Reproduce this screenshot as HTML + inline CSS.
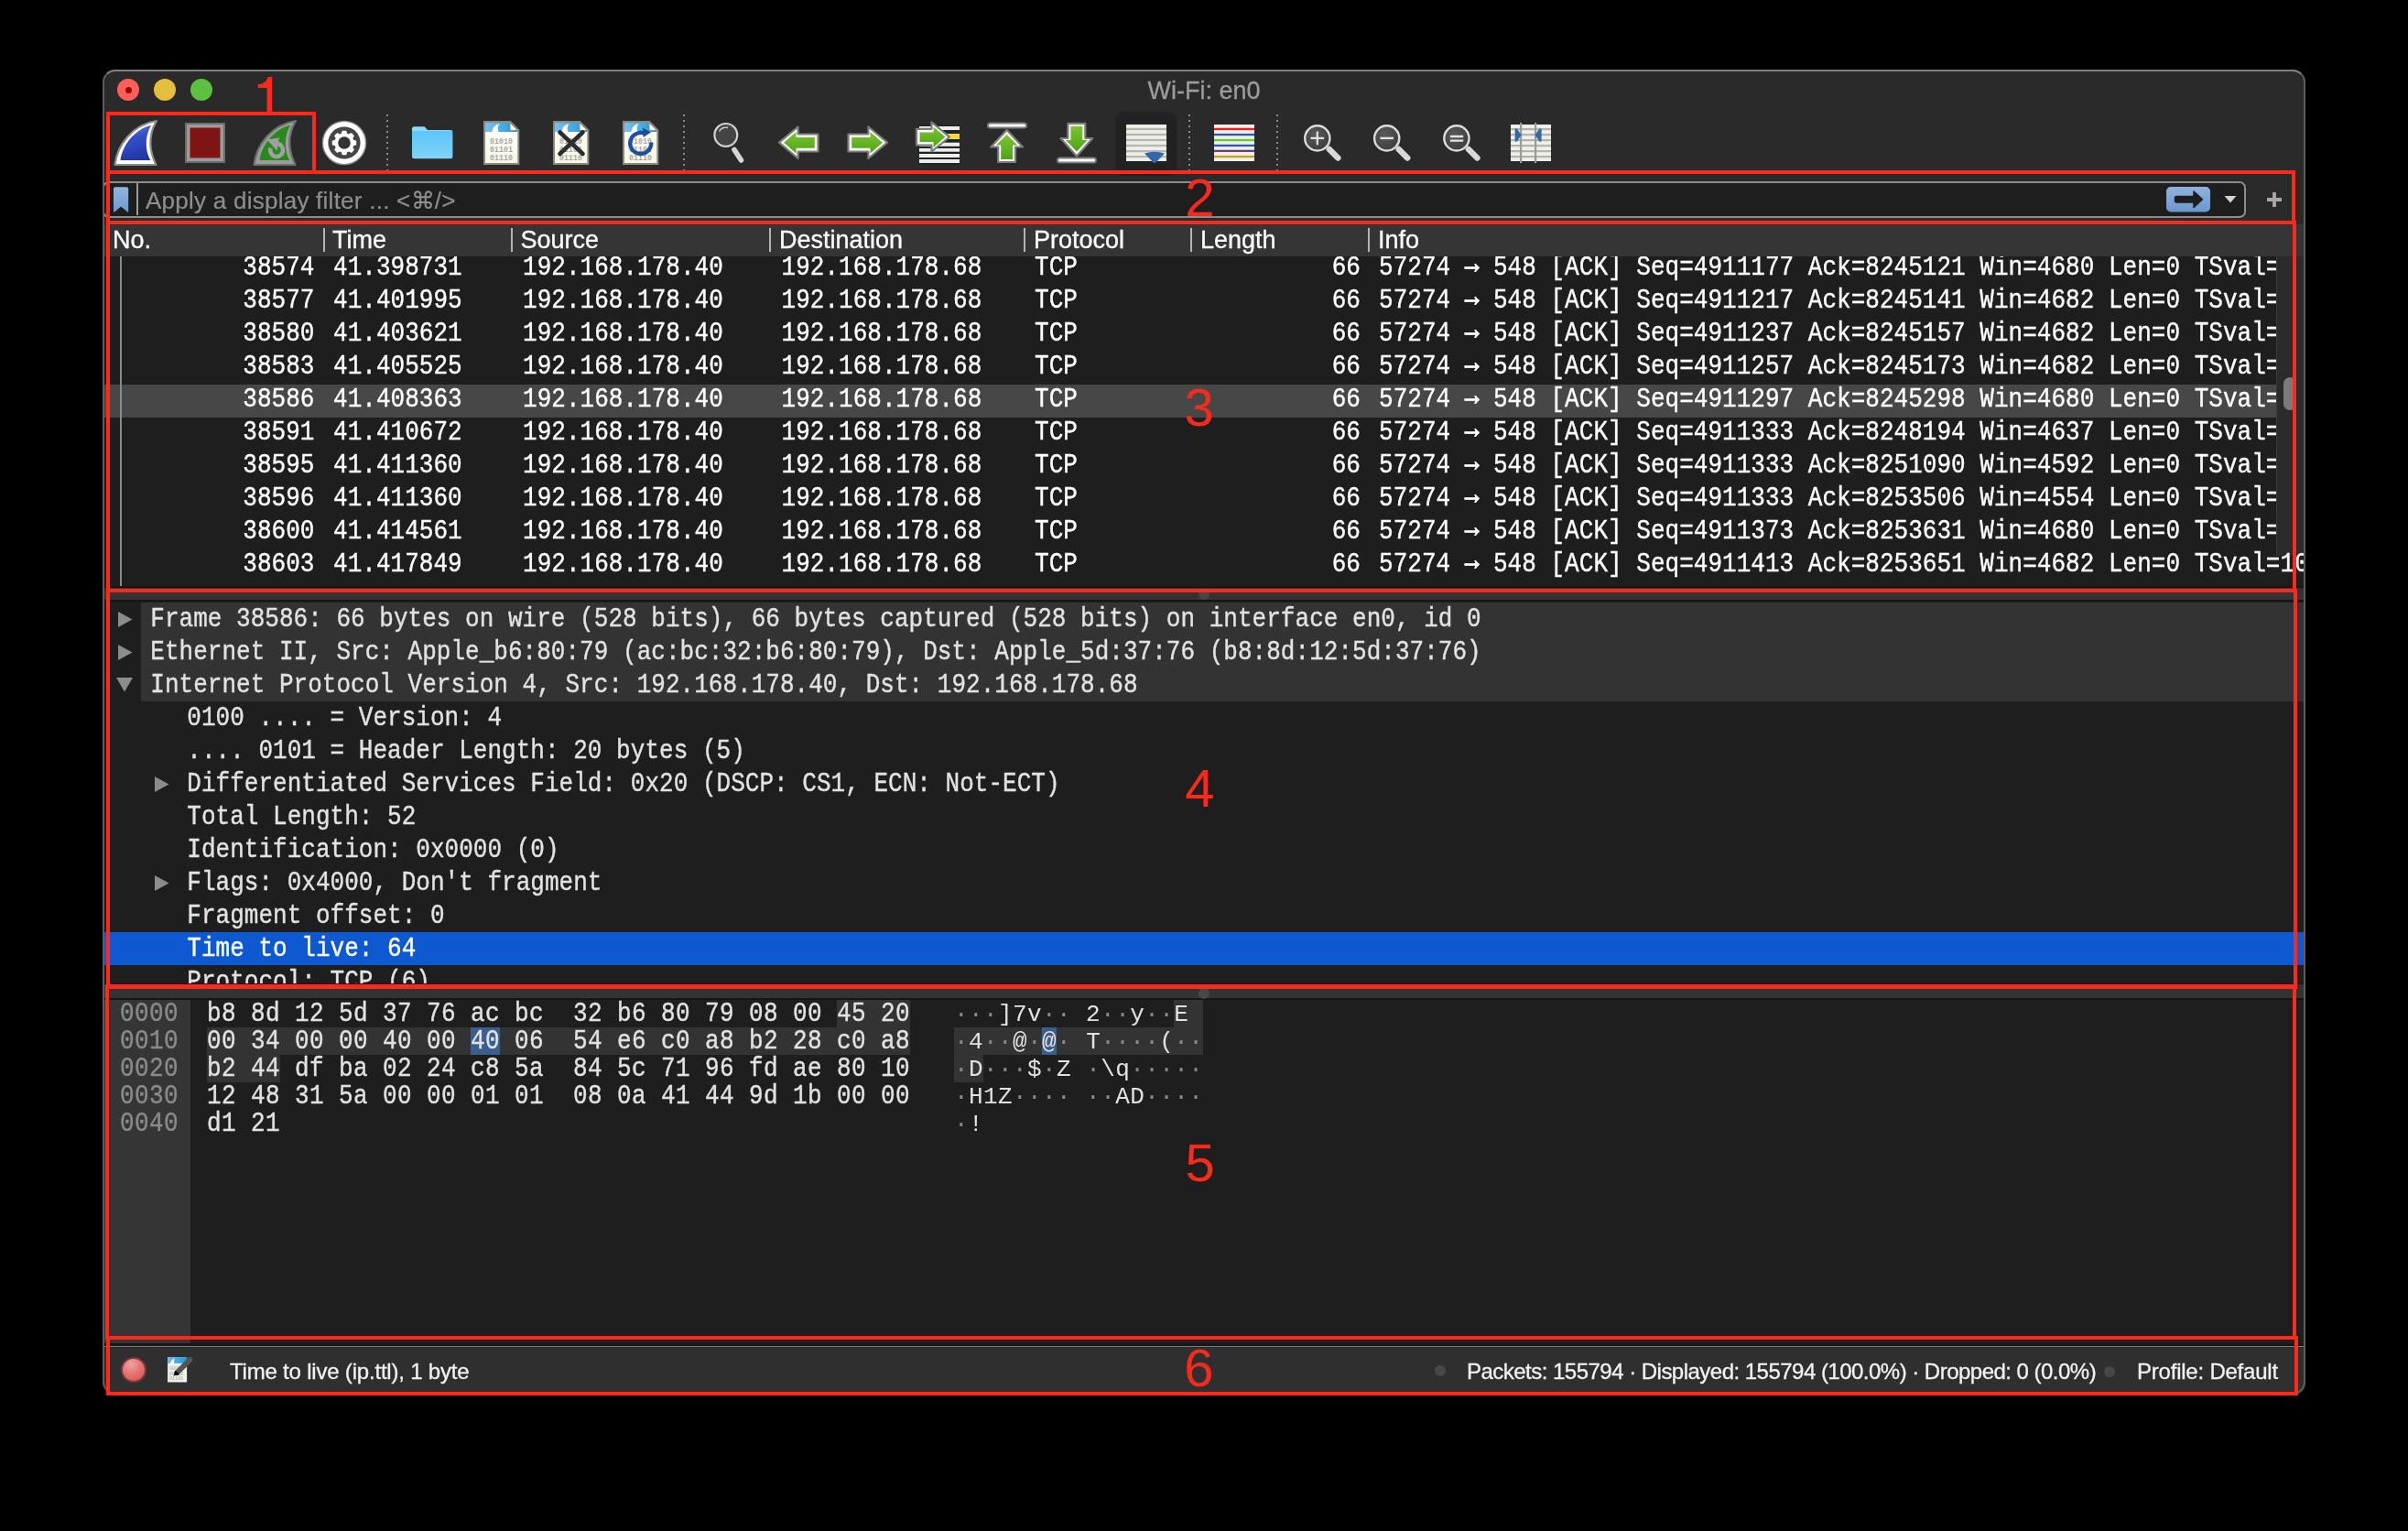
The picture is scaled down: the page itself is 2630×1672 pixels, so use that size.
<!DOCTYPE html>
<html><head><meta charset="utf-8"><title>Wireshark</title>
<style>
html,body{margin:0;padding:0;}
body{width:2630px;height:1672px;background:#000;position:relative;overflow:hidden;}
.r{position:absolute;}
.t{position:absolute;white-space:pre;}
</style></head><body>
<div style="position:absolute;left:0;top:0;width:2630px;height:1672px;will-change:transform;">
<div class="r" style="left:112px;top:76px;width:2406px;height:1447px;background:#2a2a2a;border-radius:14px;"></div>
<div class="r" style="left:128px;top:86px;width:24px;height:24px;border-radius:50%;background:#fe5f57;"></div>
<div class="r" style="left:136.5px;top:94.5px;width:7px;height:7px;border-radius:50%;background:#8f0b05;"></div>
<div class="r" style="left:168px;top:86px;width:24px;height:24px;border-radius:50%;background:#e4bf3d;"></div>
<div class="r" style="left:208px;top:86px;width:24px;height:24px;border-radius:50%;background:#5bc13f;"></div>
<div class="t" style="top:78.64px;font:27px/40px 'Liberation Sans', sans-serif;color:#9c9c9c;-webkit-text-stroke:0.3px #9c9c9c;right:1315px;transform:translateX(50%);">Wi-Fi: en0</div>
<svg class="r" style="left:0;top:0" width="2630" height="260" viewBox="0 0 2630 260"><defs>
<linearGradient id="gblue" x1="0" y1="0" x2="0.3" y2="1"><stop offset="0" stop-color="#7486de"/><stop offset="0.45" stop-color="#3450c8"/><stop offset="1" stop-color="#2338a8"/></linearGradient>
<linearGradient id="ggreen" x1="0" y1="0" x2="0" y2="1"><stop offset="0" stop-color="#7cc435"/><stop offset="1" stop-color="#4fa414"/></linearGradient>
<linearGradient id="gband" x1="0" y1="0" x2="1" y2="0"><stop offset="0" stop-color="#7cc0ea"/><stop offset="1" stop-color="#1b98da"/></linearGradient>
<linearGradient id="gpage" x1="0" y1="0" x2="0" y2="1"><stop offset="0" stop-color="#ffffff"/><stop offset="1" stop-color="#f6f6e4"/></linearGradient>
<linearGradient id="gfold" x1="0" y1="0" x2="0" y2="1"><stop offset="0" stop-color="#8fd8f9"/><stop offset="0.12" stop-color="#8fd8f9"/><stop offset="0.13" stop-color="#5ec5f6"/><stop offset="1" stop-color="#7ed4fb"/></linearGradient>
<radialGradient id="glens" cx="0.4" cy="0.35" r="0.7"><stop offset="0" stop-color="#5a5a5a"/><stop offset="1" stop-color="#3c3c3c"/></radialGradient>
</defs>
<path d="M125.5,180 C128,158 145,136 171,132 C166,140 164,150 164.3,158 C164.8,166 167,173 170.5,180 Z" fill="#ffffff" stroke="#8c8c8c" stroke-width="2.2" stroke-linejoin="round"/>
<path d="M131.5,175 C134,158 147,141.5 165,136.8 C161,144 159.5,151 159.8,158.5 C160.2,166 162,171 164.5,175 Z" fill="url(#gblue)"/>
<rect x="202" y="134" width="44" height="44" fill="#6c6c6c"/>
<rect x="204" y="136" width="40" height="40" fill="#9b9b9b"/>
<rect x="207.5" y="139.5" width="33" height="33" fill="#7e1414"/>
<path d="M277.5,180 C280,158 297,136 323,132 C318,140 316,150 316.3,158 C316.8,166 319,173 322.5,180 Z" fill="#9c9c9c" stroke="#707070" stroke-width="2.2" stroke-linejoin="round"/>
<path d="M283.5,175 C286,158 299,141.5 317,136.8 C313,144 311.5,151 311.8,158.5 C312.2,166 314,171 316.5,175 Z" fill="#288a1c"/>
<path d="M303.3,157.1 A7,7 0 1 1 295.5,161.6" fill="none" stroke="#a0a0a0" stroke-width="4.6"/>
<path d="M291.5,152.5 L305,150.5 L302.5,164.5 Z" fill="#a0a0a0"/>
<circle cx="376" cy="156" r="23.6" fill="#ffffff" stroke="#8a8a8a" stroke-width="1.4"/>
<circle cx="376" cy="156" r="17.6" fill="#454545"/>
<path d="M386.13,152.87 L389.21,153.73 L389.21,158.27 L386.13,159.13 L385.38,160.95 L386.94,163.74 L383.74,166.94 L380.95,165.38 L379.13,166.13 L378.27,169.21 L373.73,169.21 L372.87,166.13 L371.05,165.38 L368.26,166.94 L365.06,163.74 L366.62,160.95 L365.87,159.13 L362.79,158.27 L362.79,153.73 L365.87,152.87 L366.62,151.05 L365.06,148.26 L368.26,145.06 L371.05,146.62 L372.87,145.87 L373.73,142.79 L378.27,142.79 L379.13,145.87 L380.95,146.62 L383.74,145.06 L386.94,148.26 L385.38,151.05 Z" fill="#ffffff"/>
<circle cx="376" cy="156" r="6.8" fill="#333333"/>
<rect x="422" y="125" width="2" height="2" fill="#8a8a8a"/><rect x="422" y="131" width="2" height="2" fill="#8a8a8a"/><rect x="422" y="137" width="2" height="2" fill="#8a8a8a"/><rect x="422" y="143" width="2" height="2" fill="#8a8a8a"/><rect x="422" y="149" width="2" height="2" fill="#8a8a8a"/><rect x="422" y="155" width="2" height="2" fill="#8a8a8a"/><rect x="422" y="161" width="2" height="2" fill="#8a8a8a"/><rect x="422" y="167" width="2" height="2" fill="#8a8a8a"/><rect x="422" y="173" width="2" height="2" fill="#8a8a8a"/><rect x="422" y="179" width="2" height="2" fill="#8a8a8a"/><rect x="422" y="185" width="2" height="2" fill="#8a8a8a"/>
<rect x="746" y="125" width="2" height="2" fill="#8a8a8a"/><rect x="746" y="131" width="2" height="2" fill="#8a8a8a"/><rect x="746" y="137" width="2" height="2" fill="#8a8a8a"/><rect x="746" y="143" width="2" height="2" fill="#8a8a8a"/><rect x="746" y="149" width="2" height="2" fill="#8a8a8a"/><rect x="746" y="155" width="2" height="2" fill="#8a8a8a"/><rect x="746" y="161" width="2" height="2" fill="#8a8a8a"/><rect x="746" y="167" width="2" height="2" fill="#8a8a8a"/><rect x="746" y="173" width="2" height="2" fill="#8a8a8a"/><rect x="746" y="179" width="2" height="2" fill="#8a8a8a"/><rect x="746" y="185" width="2" height="2" fill="#8a8a8a"/>
<rect x="1298" y="125" width="2" height="2" fill="#8a8a8a"/><rect x="1298" y="131" width="2" height="2" fill="#8a8a8a"/><rect x="1298" y="137" width="2" height="2" fill="#8a8a8a"/><rect x="1298" y="143" width="2" height="2" fill="#8a8a8a"/><rect x="1298" y="149" width="2" height="2" fill="#8a8a8a"/><rect x="1298" y="155" width="2" height="2" fill="#8a8a8a"/><rect x="1298" y="161" width="2" height="2" fill="#8a8a8a"/><rect x="1298" y="167" width="2" height="2" fill="#8a8a8a"/><rect x="1298" y="173" width="2" height="2" fill="#8a8a8a"/><rect x="1298" y="179" width="2" height="2" fill="#8a8a8a"/><rect x="1298" y="185" width="2" height="2" fill="#8a8a8a"/>
<rect x="1394" y="125" width="2" height="2" fill="#8a8a8a"/><rect x="1394" y="131" width="2" height="2" fill="#8a8a8a"/><rect x="1394" y="137" width="2" height="2" fill="#8a8a8a"/><rect x="1394" y="143" width="2" height="2" fill="#8a8a8a"/><rect x="1394" y="149" width="2" height="2" fill="#8a8a8a"/><rect x="1394" y="155" width="2" height="2" fill="#8a8a8a"/><rect x="1394" y="161" width="2" height="2" fill="#8a8a8a"/><rect x="1394" y="167" width="2" height="2" fill="#8a8a8a"/><rect x="1394" y="173" width="2" height="2" fill="#8a8a8a"/><rect x="1394" y="179" width="2" height="2" fill="#8a8a8a"/><rect x="1394" y="185" width="2" height="2" fill="#8a8a8a"/>
<path d="M450,140.5 Q450,138.3 452.3,138.3 L463.5,138.3 L467,142 L492.2,142 Q494.4,142 494.4,144.2 L494.4,171 Q494.4,173.2 492.2,173.2 L452.2,173.2 Q450,173.2 450,171 Z" fill="url(#gfold)"/>
<path d="M528,132 L557.7,132 L567.3,141.7 L567.3,180 L528,180 Z" fill="#8a8a80"/>
<path d="M530,134 L557,134 L565.3,142.4 L565.3,178 L530,178 Z" fill="url(#gpage)"/>
<path d="M530,134 L557,134 L565.3,142.4 L565.3,144 L530,144 Z" fill="url(#gband)"/>
<path d="M537.5,144 C538,139 541,136 545.5,135 C543.5,138 543,141 544.5,144 Z" fill="#ffffff"/>
<path d="M557,134 L557,142.4 L565.3,142.4 Z" fill="#ffffff" stroke="#8a8a80" stroke-width="1"/>
<text x="535" y="156.5" font-family="Liberation Mono" font-weight="bold" font-size="8.6" fill="#a6a6a0" textLength="25" lengthAdjust="spacingAndGlyphs">01010</text>
<text x="535" y="165.5" font-family="Liberation Mono" font-weight="bold" font-size="8.6" fill="#a6a6a0" textLength="25" lengthAdjust="spacingAndGlyphs">01101</text>
<text x="535" y="174.5" font-family="Liberation Mono" font-weight="bold" font-size="8.6" fill="#a6a6a0" textLength="25" lengthAdjust="spacingAndGlyphs">01110</text>

<path d="M604,132 L633.7,132 L643.3,141.7 L643.3,180 L604,180 Z" fill="#8a8a80"/>
<path d="M606,134 L633,134 L641.3,142.4 L641.3,178 L606,178 Z" fill="url(#gpage)"/>
<path d="M606,134 L633,134 L641.3,142.4 L641.3,144 L606,144 Z" fill="url(#gband)"/>
<path d="M613.5,144 C614,139 617,136 621.5,135 C619.5,138 619,141 620.5,144 Z" fill="#ffffff"/>
<path d="M633,134 L633,142.4 L641.3,142.4 Z" fill="#ffffff" stroke="#8a8a80" stroke-width="1"/>
<text x="611" y="156.5" font-family="Liberation Mono" font-weight="bold" font-size="8.6" fill="#a6a6a0" textLength="25" lengthAdjust="spacingAndGlyphs">01010</text>
<text x="611" y="165.5" font-family="Liberation Mono" font-weight="bold" font-size="8.6" fill="#a6a6a0" textLength="25" lengthAdjust="spacingAndGlyphs">01101</text>
<text x="611" y="174.5" font-family="Liberation Mono" font-weight="bold" font-size="8.6" fill="#a6a6a0" textLength="25" lengthAdjust="spacingAndGlyphs">01110</text>
<path d="M611.5,144.5 L636.5,168 M636.5,144.5 L611.5,168" stroke="#2b2d2e" stroke-width="4.6" stroke-linecap="round"/>
<path d="M680,132 L709.7,132 L719.3,141.7 L719.3,180 L680,180 Z" fill="#8a8a80"/>
<path d="M682,134 L709,134 L717.3,142.4 L717.3,178 L682,178 Z" fill="url(#gpage)"/>
<path d="M682,134 L709,134 L717.3,142.4 L717.3,144 L682,144 Z" fill="url(#gband)"/>
<path d="M689.5,144 C690,139 693,136 697.5,135 C695.5,138 695,141 696.5,144 Z" fill="#ffffff"/>
<path d="M709,134 L709,142.4 L717.3,142.4 Z" fill="#ffffff" stroke="#8a8a80" stroke-width="1"/>
<text x="687" y="156.5" font-family="Liberation Mono" font-weight="bold" font-size="8.6" fill="#a6a6a0" textLength="25" lengthAdjust="spacingAndGlyphs">01010</text>
<text x="687" y="165.5" font-family="Liberation Mono" font-weight="bold" font-size="8.6" fill="#a6a6a0" textLength="25" lengthAdjust="spacingAndGlyphs">01101</text>
<text x="687" y="174.5" font-family="Liberation Mono" font-weight="bold" font-size="8.6" fill="#a6a6a0" textLength="25" lengthAdjust="spacingAndGlyphs">01110</text>
<path d="M705.5,146.5 A11.5,11.5 0 1 0 711.2,155.5" fill="none" stroke="#1e4f9c" stroke-width="4.4"/><path d="M702,139.5 L711,144.5 L702.5,150 Z" fill="#1e4f9c"/>
<line x1="802" y1="163.5" x2="809.5" y2="175" stroke="#d6d6d6" stroke-width="5.6" stroke-linecap="round"/>
<circle cx="792.8" cy="147.4" r="12.4" fill="#444444" stroke="#d2d2d2" stroke-width="2.2"/>
<path d="M785.5,143.5 A8,8 0 0 1 795,139.5" fill="none" stroke="#d2d2d2" stroke-width="1.4"/>
<path d="M851,155.7 L871.6,138.5 L871.6,146.5 L893.5,146.5 L893.5,165.5 L871.6,165.5 L871.6,173 Z" fill="#ffffff" stroke="#7c7c7c" stroke-width="2.2" stroke-linejoin="round"/>
<path d="M856,155.7 L869.5,144 L869.5,150 L889.8,150 L889.8,161.8 L869.5,161.8 L869.5,167.5 Z" fill="url(#ggreen)"/>
<path d="M969.0,155.7 L948.4,138.5 L948.4,146.5 L926.5,146.5 L926.5,165.5 L948.4,165.5 L948.4,173 Z" fill="#ffffff" stroke="#7c7c7c" stroke-width="2.2" stroke-linejoin="round"/>
<path d="M964.0,155.7 L950.5,144 L950.5,150 L930.2,150 L930.2,161.8 L950.5,161.8 L950.5,167.5 Z" fill="url(#ggreen)"/>
<rect x="1004" y="136" width="44" height="44" fill="#1e2428"/>
<rect x="1004" y="138" width="44" height="4" fill="#ededea"/>
<rect x="1004" y="146" width="44" height="6" fill="#f6d83a"/>
<rect x="1004" y="155.7" width="44" height="4.100000000000023" fill="#ededea"/>
<rect x="1004" y="162" width="44" height="3.6999999999999886" fill="#ededea"/>
<rect x="1004" y="168" width="44" height="4" fill="#ededea"/>
<rect x="1004" y="174" width="44" height="4" fill="#ededea"/>
<rect x="1004" y="141" width="44" height="4" fill="#ededea" opacity="0"/>
<path d="M1037,149.6 L1017.5,133.5 L1017.5,140.8 L1001,140.8 L1001,158.5 L1017.5,158.5 L1017.5,165.5 Z" fill="#ffffff" stroke="#7c7c7c" stroke-width="2.2" stroke-linejoin="round"/>
<path d="M1032.5,149.6 L1019.5,138.5 L1019.5,144.5 L1004.5,144.5 L1004.5,155 L1019.5,155 L1019.5,161 Z" fill="url(#ggreen)"/>
<rect x="1079" y="134.5" width="42" height="5" rx="2.5" fill="#ffffff" stroke="#7c7c7c" stroke-width="2"/>
<path d="M1099.6,142 L1117,160.5 L1109,160.5 L1109,177 L1090.2,177 L1090.2,160.5 L1082.3,160.5 Z" fill="#ffffff" stroke="#7c7c7c" stroke-width="2.2" stroke-linejoin="round"/>
<path d="M1099.6,147 L1111.5,158.5 L1106,158.5 L1106,174 L1093.2,174 L1093.2,158.5 L1087.7,158.5 Z" fill="url(#ggreen)"/>
<path d="M1175.9,170.5 L1193.3,151 L1185.3,151 L1185.3,134.8 L1166.4,134.8 L1166.4,151 L1158.5,151 Z" fill="#ffffff" stroke="#7c7c7c" stroke-width="2.2" stroke-linejoin="round"/>
<path d="M1175.9,165.5 L1187.8,153 L1182.3,153 L1182.3,137.8 L1169.4,137.8 L1169.4,153 L1163.9,153 Z" fill="url(#ggreen)"/>
<rect x="1155" y="172.5" width="42" height="5" rx="2.5" fill="#ffffff" stroke="#7c7c7c" stroke-width="2"/>
<rect x="1218" y="122" width="67.6" height="70" rx="9" fill="#222222"/>
<rect x="1230" y="134.5" width="44" height="42.5" fill="#1f262a"/>
<rect x="1230" y="136" width="44" height="40" fill="#eeeeea"/>
<rect x="1230" y="139.9" width="44" height="2.2" fill="#b4b6ae"/>
<rect x="1230" y="145.9" width="44" height="2.2" fill="#b4b6ae"/>
<rect x="1230" y="151.9" width="44" height="2.2" fill="#b4b6ae"/>
<rect x="1230" y="157.9" width="44" height="2.2" fill="#b4b6ae"/>
<rect x="1230" y="164" width="44" height="2.2" fill="#b4b6ae"/>
<rect x="1230" y="170" width="44" height="2.2" fill="#b4b6ae"/>
<path d="M1250,167.5 Q1261,164 1272,167.5 L1263,177 Q1261,179 1259,177 Z" fill="#3467aa"/>
<rect x="1326" y="136" width="44" height="40" fill="#efefec"/>
<rect x="1326" y="139.8" width="44" height="2.3" fill="#f01a1a"/>
<rect x="1326" y="145.9" width="44" height="2.3" fill="#2a5aa8"/>
<rect x="1326" y="151.9" width="44" height="2.3" fill="#5fcf22"/>
<rect x="1326" y="157.8" width="44" height="2.3" fill="#2a5aa8"/>
<rect x="1326" y="163.70000000000002" width="44" height="2.3" fill="#6e3c7c"/>
<rect x="1326" y="169.9" width="44" height="2.3" fill="#c8a222"/>
<line x1="1451.8" y1="163.0" x2="1461.3" y2="172.5" stroke="#d8d8d8" stroke-width="6.5" stroke-linecap="round"/>
<circle cx="1438.8" cy="150.9" r="13.6" fill="url(#glens)" stroke="#dcdcdc" stroke-width="2.4"/>
<path d="M1431.5,150.9 L1446.1,150.9 M1438.8,143.6 L1438.8,158.2" stroke="#e2e2e2" stroke-width="2.2"/>
<line x1="1527.7" y1="163.0" x2="1537.2" y2="172.5" stroke="#d8d8d8" stroke-width="6.5" stroke-linecap="round"/>
<circle cx="1514.7" cy="150.9" r="13.6" fill="url(#glens)" stroke="#dcdcdc" stroke-width="2.4"/>
<path d="M1507.4,150.9 L1522,150.9" stroke="#e2e2e2" stroke-width="2.4"/>
<line x1="1603.9" y1="163.0" x2="1613.4" y2="172.5" stroke="#d8d8d8" stroke-width="6.5" stroke-linecap="round"/>
<circle cx="1590.9" cy="150.9" r="13.6" fill="url(#glens)" stroke="#dcdcdc" stroke-width="2.4"/>
<path d="M1583.9,149 L1598.2,149 M1583.9,153.6 L1598.2,153.6" stroke="#e2e2e2" stroke-width="2.4"/>
<rect x="1650" y="136" width="44" height="40" fill="#efefec"/>
<rect x="1650" y="140" width="44" height="2.2" fill="#b2b4aa"/>
<rect x="1650" y="146" width="44" height="2.2" fill="#b2b4aa"/>
<rect x="1650" y="152" width="44" height="2.2" fill="#b2b4aa"/>
<rect x="1650" y="158" width="44" height="2.2" fill="#b2b4aa"/>
<rect x="1650" y="164" width="44" height="2.2" fill="#b2b4aa"/>
<rect x="1650" y="170" width="44" height="2.2" fill="#b2b4aa"/>
<rect x="1660" y="134" width="2.2" height="44" fill="#9a9c94"/><rect x="1676" y="134" width="2.2" height="44" fill="#9a9c94"/>
<path d="M1654.6,141.5 Q1655,139.5 1657,140.8 L1661.7,147.6 L1657,154.2 Q1655,155.5 1654.6,153.5 Z" fill="#3467aa"/>
<path d="M1683.6,141.5 Q1683.2,139.5 1681.2,140.8 L1676.5,147.6 L1681.2,154.2 Q1683.2,155.5 1683.6,153.5 Z" fill="#3467aa"/></svg>
<div class="r" style="left:112px;top:198px;width:2337px;height:36px;border:2px solid #8d8d8d;border-radius:7px;background:#1e1e1e;"></div>
<svg class="r" style="left:0;top:190px" width="2630" height="55" viewBox="0 190 2630 55"><defs><linearGradient id="gbm" x1="0" y1="0" x2="0" y2="1"><stop offset="0" stop-color="#93b4dc"/><stop offset="1" stop-color="#6c9bd2"/></linearGradient><linearGradient id="gapply" x1="0" y1="0" x2="0" y2="1"><stop offset="0" stop-color="#8fb2dc"/><stop offset="1" stop-color="#6a98cf"/></linearGradient></defs><path d="M124,206 Q124,204.2 126,204.2 L138.2,204.2 Q140.2,204.2 140.2,206 L140.2,230.5 Q140.2,232.5 138.5,231 L132.1,225.5 L125.7,231 Q124,232.5 124,230.5 Z" fill="url(#gbm)"/><rect x="149" y="200.2" width="2" height="34.8" fill="#9a9a9a"/><rect x="2366" y="204" width="48" height="27.5" rx="5" fill="url(#gapply)"/><path d="M2377.5,214.5 L2396,214.5 L2396,209 L2405.5,217.7 L2396,226.5 L2396,221 L2377.5,221 Q2375.5,221 2375.5,219 L2375.5,216.5 Q2375.5,214.5 2377.5,214.5 Z" fill="#1e1e1e" stroke="#1e1e1e" stroke-width="1.5" stroke-linejoin="round"/><path d="M2429.5,214 L2442.5,214 L2436,221.5 Z" fill="#d4d4cc"/><path d="M2476,218 L2492,218 M2484,210 L2484,226" stroke="#a8a8a8" stroke-width="3.8"/></svg>
<div class="t" style="top:199.99px;font:26px/39px 'Liberation Sans', sans-serif;color:#8e8e8e;letter-spacing:0.25px;-webkit-text-stroke:0.2px #8e8e8e;left:159px;">Apply a display filter ... &lt;⌘/&gt;</div>
<div class="r" style="left:114px;top:245px;width:2404px;height:35px;background:#353535;"></div>
<div class="r" style="left:114px;top:280px;width:2372px;height:360px;background:#1e1e1e;"></div>
<div class="r" style="left:2486px;top:280px;width:32px;height:327px;background:#2b2b2b;border-left:1px solid #3a3a3a;box-sizing:border-box;"></div>
<div class="r" style="left:2486px;top:607px;width:32px;height:33px;background:#1e1e1e;"></div>
<div class="r" style="left:353px;top:249px;width:2px;height:26px;background:#b4b4b4;"></div>
<div class="r" style="left:558px;top:249px;width:2px;height:26px;background:#b4b4b4;"></div>
<div class="r" style="left:840px;top:249px;width:2px;height:26px;background:#b4b4b4;"></div>
<div class="r" style="left:1118px;top:249px;width:2px;height:26px;background:#b4b4b4;"></div>
<div class="r" style="left:1300px;top:249px;width:2px;height:26px;background:#b4b4b4;"></div>
<div class="r" style="left:1494px;top:249px;width:2px;height:26px;background:#b4b4b4;"></div>
<div class="t" style="top:241.64px;font:27px/40px 'Liberation Sans', sans-serif;color:#ffffff;-webkit-text-stroke:0.3px #ffffff;left:123px;">No.</div>
<div class="t" style="top:241.64px;font:27px/40px 'Liberation Sans', sans-serif;color:#ffffff;-webkit-text-stroke:0.3px #ffffff;left:363px;">Time</div>
<div class="t" style="top:241.64px;font:27px/40px 'Liberation Sans', sans-serif;color:#ffffff;-webkit-text-stroke:0.3px #ffffff;left:568.5px;">Source</div>
<div class="t" style="top:241.64px;font:27px/40px 'Liberation Sans', sans-serif;color:#ffffff;-webkit-text-stroke:0.3px #ffffff;left:851px;">Destination</div>
<div class="t" style="top:241.64px;font:27px/40px 'Liberation Sans', sans-serif;color:#ffffff;-webkit-text-stroke:0.3px #ffffff;left:1129px;">Protocol</div>
<div class="t" style="top:241.64px;font:27px/40px 'Liberation Sans', sans-serif;color:#ffffff;-webkit-text-stroke:0.3px #ffffff;left:1311px;">Length</div>
<div class="t" style="top:241.64px;font:27px/40px 'Liberation Sans', sans-serif;color:#ffffff;-webkit-text-stroke:0.3px #ffffff;left:1505px;">Info</div>
<div class="r" style="left:114px;top:280px;width:2404px;height:360px;overflow:hidden;"><div class="t" style="top:-6.42px;font:26px/39px 'Liberation Mono', monospace;color:#ffffff;letter-spacing:0.025px;transform:scaleY(1.15);transform-origin:0 26.42px;-webkit-text-stroke:0.35px #ffffff;right:2174.5px;">38574</div><div class="t" style="top:-6.42px;font:26px/39px 'Liberation Mono', monospace;color:#ffffff;letter-spacing:0.025px;transform:scaleY(1.15);transform-origin:0 26.42px;-webkit-text-stroke:0.35px #ffffff;left:250px;">41.398731</div><div class="t" style="top:-6.42px;font:26px/39px 'Liberation Mono', monospace;color:#ffffff;letter-spacing:0.025px;transform:scaleY(1.15);transform-origin:0 26.42px;-webkit-text-stroke:0.35px #ffffff;left:457px;">192.168.178.40</div><div class="t" style="top:-6.42px;font:26px/39px 'Liberation Mono', monospace;color:#ffffff;letter-spacing:0.025px;transform:scaleY(1.15);transform-origin:0 26.42px;-webkit-text-stroke:0.35px #ffffff;left:739.5px;">192.168.178.68</div><div class="t" style="top:-6.42px;font:26px/39px 'Liberation Mono', monospace;color:#ffffff;letter-spacing:0.025px;transform:scaleY(1.15);transform-origin:0 26.42px;-webkit-text-stroke:0.35px #ffffff;left:1016px;">TCP</div><div class="t" style="top:-6.42px;font:26px/39px 'Liberation Mono', monospace;color:#ffffff;letter-spacing:0.025px;transform:scaleY(1.15);transform-origin:0 26.42px;-webkit-text-stroke:0.35px #ffffff;right:1032px;">66</div><div class="t" style="top:-6.42px;font:26px/39px 'Liberation Mono', monospace;color:#ffffff;letter-spacing:0.025px;transform:scaleY(1.15);transform-origin:0 26.42px;-webkit-text-stroke:0.35px #ffffff;left:1392px;width:980px;overflow:hidden;white-space:nowrap;">57274 <span style="display:inline-block;width:15.6px;transform:translateY(-1.5px) scale(1.0,1.12);transform-origin:50% 62%;-webkit-text-stroke:0.9px #fff;">→</span> 548 [ACK] Seq=4911177 Ack=8245121 Win=4680 Len=0 TSval=1000000000 TSecr=100000000</div><div class="t" style="top:29.58px;font:26px/39px 'Liberation Mono', monospace;color:#ffffff;letter-spacing:0.025px;transform:scaleY(1.15);transform-origin:0 26.42px;-webkit-text-stroke:0.35px #ffffff;right:2174.5px;">38577</div><div class="t" style="top:29.58px;font:26px/39px 'Liberation Mono', monospace;color:#ffffff;letter-spacing:0.025px;transform:scaleY(1.15);transform-origin:0 26.42px;-webkit-text-stroke:0.35px #ffffff;left:250px;">41.401995</div><div class="t" style="top:29.58px;font:26px/39px 'Liberation Mono', monospace;color:#ffffff;letter-spacing:0.025px;transform:scaleY(1.15);transform-origin:0 26.42px;-webkit-text-stroke:0.35px #ffffff;left:457px;">192.168.178.40</div><div class="t" style="top:29.58px;font:26px/39px 'Liberation Mono', monospace;color:#ffffff;letter-spacing:0.025px;transform:scaleY(1.15);transform-origin:0 26.42px;-webkit-text-stroke:0.35px #ffffff;left:739.5px;">192.168.178.68</div><div class="t" style="top:29.58px;font:26px/39px 'Liberation Mono', monospace;color:#ffffff;letter-spacing:0.025px;transform:scaleY(1.15);transform-origin:0 26.42px;-webkit-text-stroke:0.35px #ffffff;left:1016px;">TCP</div><div class="t" style="top:29.58px;font:26px/39px 'Liberation Mono', monospace;color:#ffffff;letter-spacing:0.025px;transform:scaleY(1.15);transform-origin:0 26.42px;-webkit-text-stroke:0.35px #ffffff;right:1032px;">66</div><div class="t" style="top:29.58px;font:26px/39px 'Liberation Mono', monospace;color:#ffffff;letter-spacing:0.025px;transform:scaleY(1.15);transform-origin:0 26.42px;-webkit-text-stroke:0.35px #ffffff;left:1392px;width:980px;overflow:hidden;white-space:nowrap;">57274 <span style="display:inline-block;width:15.6px;transform:translateY(-1.5px) scale(1.0,1.12);transform-origin:50% 62%;-webkit-text-stroke:0.9px #fff;">→</span> 548 [ACK] Seq=4911217 Ack=8245141 Win=4682 Len=0 TSval=1000000000 TSecr=100000000</div><div class="t" style="top:65.58px;font:26px/39px 'Liberation Mono', monospace;color:#ffffff;letter-spacing:0.025px;transform:scaleY(1.15);transform-origin:0 26.42px;-webkit-text-stroke:0.35px #ffffff;right:2174.5px;">38580</div><div class="t" style="top:65.58px;font:26px/39px 'Liberation Mono', monospace;color:#ffffff;letter-spacing:0.025px;transform:scaleY(1.15);transform-origin:0 26.42px;-webkit-text-stroke:0.35px #ffffff;left:250px;">41.403621</div><div class="t" style="top:65.58px;font:26px/39px 'Liberation Mono', monospace;color:#ffffff;letter-spacing:0.025px;transform:scaleY(1.15);transform-origin:0 26.42px;-webkit-text-stroke:0.35px #ffffff;left:457px;">192.168.178.40</div><div class="t" style="top:65.58px;font:26px/39px 'Liberation Mono', monospace;color:#ffffff;letter-spacing:0.025px;transform:scaleY(1.15);transform-origin:0 26.42px;-webkit-text-stroke:0.35px #ffffff;left:739.5px;">192.168.178.68</div><div class="t" style="top:65.58px;font:26px/39px 'Liberation Mono', monospace;color:#ffffff;letter-spacing:0.025px;transform:scaleY(1.15);transform-origin:0 26.42px;-webkit-text-stroke:0.35px #ffffff;left:1016px;">TCP</div><div class="t" style="top:65.58px;font:26px/39px 'Liberation Mono', monospace;color:#ffffff;letter-spacing:0.025px;transform:scaleY(1.15);transform-origin:0 26.42px;-webkit-text-stroke:0.35px #ffffff;right:1032px;">66</div><div class="t" style="top:65.58px;font:26px/39px 'Liberation Mono', monospace;color:#ffffff;letter-spacing:0.025px;transform:scaleY(1.15);transform-origin:0 26.42px;-webkit-text-stroke:0.35px #ffffff;left:1392px;width:980px;overflow:hidden;white-space:nowrap;">57274 <span style="display:inline-block;width:15.6px;transform:translateY(-1.5px) scale(1.0,1.12);transform-origin:50% 62%;-webkit-text-stroke:0.9px #fff;">→</span> 548 [ACK] Seq=4911237 Ack=8245157 Win=4682 Len=0 TSval=1000000000 TSecr=100000000</div><div class="t" style="top:101.58px;font:26px/39px 'Liberation Mono', monospace;color:#ffffff;letter-spacing:0.025px;transform:scaleY(1.15);transform-origin:0 26.42px;-webkit-text-stroke:0.35px #ffffff;right:2174.5px;">38583</div><div class="t" style="top:101.58px;font:26px/39px 'Liberation Mono', monospace;color:#ffffff;letter-spacing:0.025px;transform:scaleY(1.15);transform-origin:0 26.42px;-webkit-text-stroke:0.35px #ffffff;left:250px;">41.405525</div><div class="t" style="top:101.58px;font:26px/39px 'Liberation Mono', monospace;color:#ffffff;letter-spacing:0.025px;transform:scaleY(1.15);transform-origin:0 26.42px;-webkit-text-stroke:0.35px #ffffff;left:457px;">192.168.178.40</div><div class="t" style="top:101.58px;font:26px/39px 'Liberation Mono', monospace;color:#ffffff;letter-spacing:0.025px;transform:scaleY(1.15);transform-origin:0 26.42px;-webkit-text-stroke:0.35px #ffffff;left:739.5px;">192.168.178.68</div><div class="t" style="top:101.58px;font:26px/39px 'Liberation Mono', monospace;color:#ffffff;letter-spacing:0.025px;transform:scaleY(1.15);transform-origin:0 26.42px;-webkit-text-stroke:0.35px #ffffff;left:1016px;">TCP</div><div class="t" style="top:101.58px;font:26px/39px 'Liberation Mono', monospace;color:#ffffff;letter-spacing:0.025px;transform:scaleY(1.15);transform-origin:0 26.42px;-webkit-text-stroke:0.35px #ffffff;right:1032px;">66</div><div class="t" style="top:101.58px;font:26px/39px 'Liberation Mono', monospace;color:#ffffff;letter-spacing:0.025px;transform:scaleY(1.15);transform-origin:0 26.42px;-webkit-text-stroke:0.35px #ffffff;left:1392px;width:980px;overflow:hidden;white-space:nowrap;">57274 <span style="display:inline-block;width:15.6px;transform:translateY(-1.5px) scale(1.0,1.12);transform-origin:50% 62%;-webkit-text-stroke:0.9px #fff;">→</span> 548 [ACK] Seq=4911257 Ack=8245173 Win=4682 Len=0 TSval=1000000000 TSecr=100000000</div><div class="r" style="left:0px;top:140px;width:2372px;height:36px;background:#474747;"></div><div class="t" style="top:137.58px;font:26px/39px 'Liberation Mono', monospace;color:#ffffff;letter-spacing:0.025px;transform:scaleY(1.15);transform-origin:0 26.42px;-webkit-text-stroke:0.35px #ffffff;right:2174.5px;">38586</div><div class="t" style="top:137.58px;font:26px/39px 'Liberation Mono', monospace;color:#ffffff;letter-spacing:0.025px;transform:scaleY(1.15);transform-origin:0 26.42px;-webkit-text-stroke:0.35px #ffffff;left:250px;">41.408363</div><div class="t" style="top:137.58px;font:26px/39px 'Liberation Mono', monospace;color:#ffffff;letter-spacing:0.025px;transform:scaleY(1.15);transform-origin:0 26.42px;-webkit-text-stroke:0.35px #ffffff;left:457px;">192.168.178.40</div><div class="t" style="top:137.58px;font:26px/39px 'Liberation Mono', monospace;color:#ffffff;letter-spacing:0.025px;transform:scaleY(1.15);transform-origin:0 26.42px;-webkit-text-stroke:0.35px #ffffff;left:739.5px;">192.168.178.68</div><div class="t" style="top:137.58px;font:26px/39px 'Liberation Mono', monospace;color:#ffffff;letter-spacing:0.025px;transform:scaleY(1.15);transform-origin:0 26.42px;-webkit-text-stroke:0.35px #ffffff;left:1016px;">TCP</div><div class="t" style="top:137.58px;font:26px/39px 'Liberation Mono', monospace;color:#ffffff;letter-spacing:0.025px;transform:scaleY(1.15);transform-origin:0 26.42px;-webkit-text-stroke:0.35px #ffffff;right:1032px;">66</div><div class="t" style="top:137.58px;font:26px/39px 'Liberation Mono', monospace;color:#ffffff;letter-spacing:0.025px;transform:scaleY(1.15);transform-origin:0 26.42px;-webkit-text-stroke:0.35px #ffffff;left:1392px;width:980px;overflow:hidden;white-space:nowrap;">57274 <span style="display:inline-block;width:15.6px;transform:translateY(-1.5px) scale(1.0,1.12);transform-origin:50% 62%;-webkit-text-stroke:0.9px #fff;">→</span> 548 [ACK] Seq=4911297 Ack=8245298 Win=4680 Len=0 TSval=1000000000 TSecr=100000000</div><div class="t" style="top:173.58px;font:26px/39px 'Liberation Mono', monospace;color:#ffffff;letter-spacing:0.025px;transform:scaleY(1.15);transform-origin:0 26.42px;-webkit-text-stroke:0.35px #ffffff;right:2174.5px;">38591</div><div class="t" style="top:173.58px;font:26px/39px 'Liberation Mono', monospace;color:#ffffff;letter-spacing:0.025px;transform:scaleY(1.15);transform-origin:0 26.42px;-webkit-text-stroke:0.35px #ffffff;left:250px;">41.410672</div><div class="t" style="top:173.58px;font:26px/39px 'Liberation Mono', monospace;color:#ffffff;letter-spacing:0.025px;transform:scaleY(1.15);transform-origin:0 26.42px;-webkit-text-stroke:0.35px #ffffff;left:457px;">192.168.178.40</div><div class="t" style="top:173.58px;font:26px/39px 'Liberation Mono', monospace;color:#ffffff;letter-spacing:0.025px;transform:scaleY(1.15);transform-origin:0 26.42px;-webkit-text-stroke:0.35px #ffffff;left:739.5px;">192.168.178.68</div><div class="t" style="top:173.58px;font:26px/39px 'Liberation Mono', monospace;color:#ffffff;letter-spacing:0.025px;transform:scaleY(1.15);transform-origin:0 26.42px;-webkit-text-stroke:0.35px #ffffff;left:1016px;">TCP</div><div class="t" style="top:173.58px;font:26px/39px 'Liberation Mono', monospace;color:#ffffff;letter-spacing:0.025px;transform:scaleY(1.15);transform-origin:0 26.42px;-webkit-text-stroke:0.35px #ffffff;right:1032px;">66</div><div class="t" style="top:173.58px;font:26px/39px 'Liberation Mono', monospace;color:#ffffff;letter-spacing:0.025px;transform:scaleY(1.15);transform-origin:0 26.42px;-webkit-text-stroke:0.35px #ffffff;left:1392px;width:980px;overflow:hidden;white-space:nowrap;">57274 <span style="display:inline-block;width:15.6px;transform:translateY(-1.5px) scale(1.0,1.12);transform-origin:50% 62%;-webkit-text-stroke:0.9px #fff;">→</span> 548 [ACK] Seq=4911333 Ack=8248194 Win=4637 Len=0 TSval=1000000000 TSecr=100000000</div><div class="t" style="top:209.58px;font:26px/39px 'Liberation Mono', monospace;color:#ffffff;letter-spacing:0.025px;transform:scaleY(1.15);transform-origin:0 26.42px;-webkit-text-stroke:0.35px #ffffff;right:2174.5px;">38595</div><div class="t" style="top:209.58px;font:26px/39px 'Liberation Mono', monospace;color:#ffffff;letter-spacing:0.025px;transform:scaleY(1.15);transform-origin:0 26.42px;-webkit-text-stroke:0.35px #ffffff;left:250px;">41.411360</div><div class="t" style="top:209.58px;font:26px/39px 'Liberation Mono', monospace;color:#ffffff;letter-spacing:0.025px;transform:scaleY(1.15);transform-origin:0 26.42px;-webkit-text-stroke:0.35px #ffffff;left:457px;">192.168.178.40</div><div class="t" style="top:209.58px;font:26px/39px 'Liberation Mono', monospace;color:#ffffff;letter-spacing:0.025px;transform:scaleY(1.15);transform-origin:0 26.42px;-webkit-text-stroke:0.35px #ffffff;left:739.5px;">192.168.178.68</div><div class="t" style="top:209.58px;font:26px/39px 'Liberation Mono', monospace;color:#ffffff;letter-spacing:0.025px;transform:scaleY(1.15);transform-origin:0 26.42px;-webkit-text-stroke:0.35px #ffffff;left:1016px;">TCP</div><div class="t" style="top:209.58px;font:26px/39px 'Liberation Mono', monospace;color:#ffffff;letter-spacing:0.025px;transform:scaleY(1.15);transform-origin:0 26.42px;-webkit-text-stroke:0.35px #ffffff;right:1032px;">66</div><div class="t" style="top:209.58px;font:26px/39px 'Liberation Mono', monospace;color:#ffffff;letter-spacing:0.025px;transform:scaleY(1.15);transform-origin:0 26.42px;-webkit-text-stroke:0.35px #ffffff;left:1392px;width:980px;overflow:hidden;white-space:nowrap;">57274 <span style="display:inline-block;width:15.6px;transform:translateY(-1.5px) scale(1.0,1.12);transform-origin:50% 62%;-webkit-text-stroke:0.9px #fff;">→</span> 548 [ACK] Seq=4911333 Ack=8251090 Win=4592 Len=0 TSval=1000000000 TSecr=100000000</div><div class="t" style="top:245.58px;font:26px/39px 'Liberation Mono', monospace;color:#ffffff;letter-spacing:0.025px;transform:scaleY(1.15);transform-origin:0 26.42px;-webkit-text-stroke:0.35px #ffffff;right:2174.5px;">38596</div><div class="t" style="top:245.58px;font:26px/39px 'Liberation Mono', monospace;color:#ffffff;letter-spacing:0.025px;transform:scaleY(1.15);transform-origin:0 26.42px;-webkit-text-stroke:0.35px #ffffff;left:250px;">41.411360</div><div class="t" style="top:245.58px;font:26px/39px 'Liberation Mono', monospace;color:#ffffff;letter-spacing:0.025px;transform:scaleY(1.15);transform-origin:0 26.42px;-webkit-text-stroke:0.35px #ffffff;left:457px;">192.168.178.40</div><div class="t" style="top:245.58px;font:26px/39px 'Liberation Mono', monospace;color:#ffffff;letter-spacing:0.025px;transform:scaleY(1.15);transform-origin:0 26.42px;-webkit-text-stroke:0.35px #ffffff;left:739.5px;">192.168.178.68</div><div class="t" style="top:245.58px;font:26px/39px 'Liberation Mono', monospace;color:#ffffff;letter-spacing:0.025px;transform:scaleY(1.15);transform-origin:0 26.42px;-webkit-text-stroke:0.35px #ffffff;left:1016px;">TCP</div><div class="t" style="top:245.58px;font:26px/39px 'Liberation Mono', monospace;color:#ffffff;letter-spacing:0.025px;transform:scaleY(1.15);transform-origin:0 26.42px;-webkit-text-stroke:0.35px #ffffff;right:1032px;">66</div><div class="t" style="top:245.58px;font:26px/39px 'Liberation Mono', monospace;color:#ffffff;letter-spacing:0.025px;transform:scaleY(1.15);transform-origin:0 26.42px;-webkit-text-stroke:0.35px #ffffff;left:1392px;width:980px;overflow:hidden;white-space:nowrap;">57274 <span style="display:inline-block;width:15.6px;transform:translateY(-1.5px) scale(1.0,1.12);transform-origin:50% 62%;-webkit-text-stroke:0.9px #fff;">→</span> 548 [ACK] Seq=4911333 Ack=8253506 Win=4554 Len=0 TSval=1000000000 TSecr=100000000</div><div class="t" style="top:281.58px;font:26px/39px 'Liberation Mono', monospace;color:#ffffff;letter-spacing:0.025px;transform:scaleY(1.15);transform-origin:0 26.42px;-webkit-text-stroke:0.35px #ffffff;right:2174.5px;">38600</div><div class="t" style="top:281.58px;font:26px/39px 'Liberation Mono', monospace;color:#ffffff;letter-spacing:0.025px;transform:scaleY(1.15);transform-origin:0 26.42px;-webkit-text-stroke:0.35px #ffffff;left:250px;">41.414561</div><div class="t" style="top:281.58px;font:26px/39px 'Liberation Mono', monospace;color:#ffffff;letter-spacing:0.025px;transform:scaleY(1.15);transform-origin:0 26.42px;-webkit-text-stroke:0.35px #ffffff;left:457px;">192.168.178.40</div><div class="t" style="top:281.58px;font:26px/39px 'Liberation Mono', monospace;color:#ffffff;letter-spacing:0.025px;transform:scaleY(1.15);transform-origin:0 26.42px;-webkit-text-stroke:0.35px #ffffff;left:739.5px;">192.168.178.68</div><div class="t" style="top:281.58px;font:26px/39px 'Liberation Mono', monospace;color:#ffffff;letter-spacing:0.025px;transform:scaleY(1.15);transform-origin:0 26.42px;-webkit-text-stroke:0.35px #ffffff;left:1016px;">TCP</div><div class="t" style="top:281.58px;font:26px/39px 'Liberation Mono', monospace;color:#ffffff;letter-spacing:0.025px;transform:scaleY(1.15);transform-origin:0 26.42px;-webkit-text-stroke:0.35px #ffffff;right:1032px;">66</div><div class="t" style="top:281.58px;font:26px/39px 'Liberation Mono', monospace;color:#ffffff;letter-spacing:0.025px;transform:scaleY(1.15);transform-origin:0 26.42px;-webkit-text-stroke:0.35px #ffffff;left:1392px;width:980px;overflow:hidden;white-space:nowrap;">57274 <span style="display:inline-block;width:15.6px;transform:translateY(-1.5px) scale(1.0,1.12);transform-origin:50% 62%;-webkit-text-stroke:0.9px #fff;">→</span> 548 [ACK] Seq=4911373 Ack=8253631 Win=4680 Len=0 TSval=1000000000 TSecr=100000000</div><div class="t" style="top:317.58px;font:26px/39px 'Liberation Mono', monospace;color:#ffffff;letter-spacing:0.025px;transform:scaleY(1.15);transform-origin:0 26.42px;-webkit-text-stroke:0.35px #ffffff;right:2174.5px;">38603</div><div class="t" style="top:317.58px;font:26px/39px 'Liberation Mono', monospace;color:#ffffff;letter-spacing:0.025px;transform:scaleY(1.15);transform-origin:0 26.42px;-webkit-text-stroke:0.35px #ffffff;left:250px;">41.417849</div><div class="t" style="top:317.58px;font:26px/39px 'Liberation Mono', monospace;color:#ffffff;letter-spacing:0.025px;transform:scaleY(1.15);transform-origin:0 26.42px;-webkit-text-stroke:0.35px #ffffff;left:457px;">192.168.178.40</div><div class="t" style="top:317.58px;font:26px/39px 'Liberation Mono', monospace;color:#ffffff;letter-spacing:0.025px;transform:scaleY(1.15);transform-origin:0 26.42px;-webkit-text-stroke:0.35px #ffffff;left:739.5px;">192.168.178.68</div><div class="t" style="top:317.58px;font:26px/39px 'Liberation Mono', monospace;color:#ffffff;letter-spacing:0.025px;transform:scaleY(1.15);transform-origin:0 26.42px;-webkit-text-stroke:0.35px #ffffff;left:1016px;">TCP</div><div class="t" style="top:317.58px;font:26px/39px 'Liberation Mono', monospace;color:#ffffff;letter-spacing:0.025px;transform:scaleY(1.15);transform-origin:0 26.42px;-webkit-text-stroke:0.35px #ffffff;right:1032px;">66</div><div class="t" style="top:317.58px;font:26px/39px 'Liberation Mono', monospace;color:#ffffff;letter-spacing:0.025px;transform:scaleY(1.15);transform-origin:0 26.42px;-webkit-text-stroke:0.35px #ffffff;left:1392px;width:1010px;overflow:hidden;white-space:nowrap;">57274 <span style="display:inline-block;width:15.6px;transform:translateY(-1.5px) scale(1.0,1.12);transform-origin:50% 62%;-webkit-text-stroke:0.9px #fff;">→</span> 548 [ACK] Seq=4911413 Ack=8253651 Win=4682 Len=0 TSval=1000000000 TSecr=100000000</div><div class="r" style="left:17px;top:0px;width:2px;height:360px;background:#8a8a8a;"></div></div>
<div class="r" style="left:2494px;top:412px;width:14px;height:36px;border-radius:7px;background:#7a7a7a;"></div>
<div class="r" style="left:114px;top:640px;width:2404px;height:17px;background:#333333;"></div>
<div class="r" style="left:114px;top:640px;width:2404px;height:2px;background:#161616;"></div>
<div class="r" style="left:114px;top:655px;width:2404px;height:2px;background:#161616;"></div>
<div class="r" style="left:114px;top:657px;width:2404px;height:417px;overflow:hidden;background:#1e1e1e;"><div class="r" style="left:40px;top:1px;width:2364px;height:108px;background:#333333;"></div><div class="r" style="left:0px;top:361px;width:2404px;height:36px;background:#0e58d2;"></div><div class="t" style="top:1.38px;font:26px/39px 'Liberation Mono', monospace;color:#e2e2e2;letter-spacing:0.025px;transform:scaleY(1.15);transform-origin:0 26.42px;-webkit-text-stroke:0.35px #e2e2e2;left:50.30000000000001px;">Frame 38586: 66 bytes on wire (528 bits), 66 bytes captured (528 bits) on interface en0, id 0</div><svg class="r" style="left:15px;top:10.5px" width="16" height="18"><path d="M0 0 L15.5 8.5 L0 17 Z" fill="#8c8c8c"/></svg><div class="t" style="top:37.38px;font:26px/39px 'Liberation Mono', monospace;color:#e2e2e2;letter-spacing:0.025px;transform:scaleY(1.15);transform-origin:0 26.42px;-webkit-text-stroke:0.35px #e2e2e2;left:50.30000000000001px;">Ethernet II, Src: Apple_b6:80:79 (ac:bc:32:b6:80:79), Dst: Apple_5d:37:76 (b8:8d:12:5d:37:76)</div><svg class="r" style="left:15px;top:46.5px" width="16" height="18"><path d="M0 0 L15.5 8.5 L0 17 Z" fill="#8c8c8c"/></svg><div class="t" style="top:73.38px;font:26px/39px 'Liberation Mono', monospace;color:#e2e2e2;letter-spacing:0.025px;transform:scaleY(1.15);transform-origin:0 26.42px;-webkit-text-stroke:0.35px #e2e2e2;left:50.30000000000001px;">Internet Protocol Version 4, Src: 192.168.178.40, Dst: 192.168.178.68</div><svg class="r" style="left:13px;top:83px" width="19" height="16"><path d="M0 0 L18 0 L9 15.5 Z" fill="#8c8c8c"/></svg><div class="t" style="top:109.38px;font:26px/39px 'Liberation Mono', monospace;color:#e2e2e2;letter-spacing:0.025px;transform:scaleY(1.15);transform-origin:0 26.42px;-webkit-text-stroke:0.35px #e2e2e2;left:90.30000000000001px;">0100 .... = Version: 4</div><div class="t" style="top:145.38px;font:26px/39px 'Liberation Mono', monospace;color:#e2e2e2;letter-spacing:0.025px;transform:scaleY(1.15);transform-origin:0 26.42px;-webkit-text-stroke:0.35px #e2e2e2;left:90.30000000000001px;">.... 0101 = Header Length: 20 bytes (5)</div><div class="t" style="top:181.38px;font:26px/39px 'Liberation Mono', monospace;color:#e2e2e2;letter-spacing:0.025px;transform:scaleY(1.15);transform-origin:0 26.42px;-webkit-text-stroke:0.35px #e2e2e2;left:90.30000000000001px;">Differentiated Services Field: 0x20 (DSCP: CS1, ECN: Not-ECT)</div><svg class="r" style="left:55px;top:190.5px" width="16" height="18"><path d="M0 0 L15.5 8.5 L0 17 Z" fill="#8c8c8c"/></svg><div class="t" style="top:217.38px;font:26px/39px 'Liberation Mono', monospace;color:#e2e2e2;letter-spacing:0.025px;transform:scaleY(1.15);transform-origin:0 26.42px;-webkit-text-stroke:0.35px #e2e2e2;left:90.30000000000001px;">Total Length: 52</div><div class="t" style="top:253.38px;font:26px/39px 'Liberation Mono', monospace;color:#e2e2e2;letter-spacing:0.025px;transform:scaleY(1.15);transform-origin:0 26.42px;-webkit-text-stroke:0.35px #e2e2e2;left:90.30000000000001px;">Identification: 0x0000 (0)</div><div class="t" style="top:289.38px;font:26px/39px 'Liberation Mono', monospace;color:#e2e2e2;letter-spacing:0.025px;transform:scaleY(1.15);transform-origin:0 26.42px;-webkit-text-stroke:0.35px #e2e2e2;left:90.30000000000001px;">Flags: 0x4000, Don&#x27;t fragment</div><svg class="r" style="left:55px;top:298.5px" width="16" height="18"><path d="M0 0 L15.5 8.5 L0 17 Z" fill="#8c8c8c"/></svg><div class="t" style="top:325.38px;font:26px/39px 'Liberation Mono', monospace;color:#e2e2e2;letter-spacing:0.025px;transform:scaleY(1.15);transform-origin:0 26.42px;-webkit-text-stroke:0.35px #e2e2e2;left:90.30000000000001px;">Fragment offset: 0</div><div class="t" style="top:361.38px;font:26px/39px 'Liberation Mono', monospace;color:#ffffff;letter-spacing:0.025px;transform:scaleY(1.15);transform-origin:0 26.42px;-webkit-text-stroke:0.35px #ffffff;left:90.30000000000001px;">Time to live: 64</div><div class="t" style="top:397.38px;font:26px/39px 'Liberation Mono', monospace;color:#e2e2e2;letter-spacing:0.025px;transform:scaleY(1.15);transform-origin:0 26.42px;-webkit-text-stroke:0.35px #e2e2e2;left:90.30000000000001px;">Protocol: TCP (6)</div></div>
<div class="r" style="left:1309px;top:643px;width:12px;height:12px;border-radius:50%;background:#474747;"></div>
<div class="r" style="left:114px;top:1074px;width:2404px;height:18px;background:#333333;"></div>
<div class="r" style="left:114px;top:1074px;width:2404px;height:1px;background:#161616;"></div>
<div class="r" style="left:114px;top:1090px;width:2404px;height:2px;background:#161616;"></div>
<div class="r" style="left:1309px;top:1079px;width:12px;height:12px;border-radius:50%;background:#474747;"></div>
<div class="r" style="left:114px;top:1092px;width:2404px;height:375px;overflow:hidden;background:#1e1e1e;"><div class="r" style="left:0px;top:0px;width:94px;height:375px;background:#353535;"></div><div class="r" style="left:800px;top:0px;width:80px;height:30px;background:#333333;"></div><div class="r" style="left:112px;top:30px;width:768px;height:30px;background:#333333;"></div><div class="r" style="left:112px;top:60px;width:80px;height:30px;background:#333333;"></div><div class="r" style="left:1168px;top:0px;width:32px;height:30px;background:#333333;"></div><div class="r" style="left:928px;top:30px;width:272px;height:30px;background:#333333;"></div><div class="r" style="left:928px;top:60px;width:32px;height:30px;background:#333333;"></div><div class="r" style="left:400px;top:30px;width:32px;height:30px;background:#3a5e8e;"></div><div class="r" style="left:1024px;top:30px;width:16px;height:30px;background:#3a5e8e;"></div><div class="t" style="top:-2.62px;font:26px/39px 'Liberation Mono', monospace;color:#8a8a8a;letter-spacing:0.40000000000000036px;transform:scaleY(1.15);transform-origin:0 26.42px;-webkit-text-stroke:0.35px #8a8a8a;left:17px;">0000</div><div class="t" style="top:-2.62px;font:26px/39px 'Liberation Mono', monospace;color:#e2e2e2;letter-spacing:0.40000000000000036px;transform:scaleY(1.15);transform-origin:0 26.42px;-webkit-text-stroke:0.35px #e2e2e2;left:112px;">b8 8d 12 5d 37 76 ac bc  32 b6 80 79 08 00 45 20</div><div class="t" style="left:928px;top:-2.62px;font:26px/39px 'Liberation Mono', monospace;color:#e2e2e2;letter-spacing:0.40000000000000036px;"><span style="color:#8a8a8a">·</span><span style="color:#8a8a8a">·</span><span style="color:#8a8a8a">·</span>]7v<span style="color:#8a8a8a">·</span><span style="color:#8a8a8a">·</span> 2<span style="color:#8a8a8a">·</span><span style="color:#8a8a8a">·</span>y<span style="color:#8a8a8a">·</span><span style="color:#8a8a8a">·</span>E </div><div class="t" style="top:27.38px;font:26px/39px 'Liberation Mono', monospace;color:#8a8a8a;letter-spacing:0.40000000000000036px;transform:scaleY(1.15);transform-origin:0 26.42px;-webkit-text-stroke:0.35px #8a8a8a;left:17px;">0010</div><div class="t" style="top:27.38px;font:26px/39px 'Liberation Mono', monospace;color:#e2e2e2;letter-spacing:0.40000000000000036px;transform:scaleY(1.15);transform-origin:0 26.42px;-webkit-text-stroke:0.35px #e2e2e2;left:112px;">00 34 00 00 40 00 40 06  54 e6 c0 a8 b2 28 c0 a8</div><div class="t" style="left:928px;top:27.38px;font:26px/39px 'Liberation Mono', monospace;color:#e2e2e2;letter-spacing:0.40000000000000036px;"><span style="color:#8a8a8a">·</span>4<span style="color:#8a8a8a">·</span><span style="color:#8a8a8a">·</span>@<span style="color:#8a8a8a">·</span>@<span style="color:#8a8a8a">·</span> T<span style="color:#8a8a8a">·</span><span style="color:#8a8a8a">·</span><span style="color:#8a8a8a">·</span><span style="color:#8a8a8a">·</span>(<span style="color:#8a8a8a">·</span><span style="color:#8a8a8a">·</span></div><div class="t" style="top:57.38px;font:26px/39px 'Liberation Mono', monospace;color:#8a8a8a;letter-spacing:0.40000000000000036px;transform:scaleY(1.15);transform-origin:0 26.42px;-webkit-text-stroke:0.35px #8a8a8a;left:17px;">0020</div><div class="t" style="top:57.38px;font:26px/39px 'Liberation Mono', monospace;color:#e2e2e2;letter-spacing:0.40000000000000036px;transform:scaleY(1.15);transform-origin:0 26.42px;-webkit-text-stroke:0.35px #e2e2e2;left:112px;">b2 44 df ba 02 24 c8 5a  84 5c 71 96 fd ae 80 10</div><div class="t" style="left:928px;top:57.38px;font:26px/39px 'Liberation Mono', monospace;color:#e2e2e2;letter-spacing:0.40000000000000036px;"><span style="color:#8a8a8a">·</span>D<span style="color:#8a8a8a">·</span><span style="color:#8a8a8a">·</span><span style="color:#8a8a8a">·</span>$<span style="color:#8a8a8a">·</span>Z <span style="color:#8a8a8a">·</span>\q<span style="color:#8a8a8a">·</span><span style="color:#8a8a8a">·</span><span style="color:#8a8a8a">·</span><span style="color:#8a8a8a">·</span><span style="color:#8a8a8a">·</span></div><div class="t" style="top:87.38px;font:26px/39px 'Liberation Mono', monospace;color:#8a8a8a;letter-spacing:0.40000000000000036px;transform:scaleY(1.15);transform-origin:0 26.42px;-webkit-text-stroke:0.35px #8a8a8a;left:17px;">0030</div><div class="t" style="top:87.38px;font:26px/39px 'Liberation Mono', monospace;color:#e2e2e2;letter-spacing:0.40000000000000036px;transform:scaleY(1.15);transform-origin:0 26.42px;-webkit-text-stroke:0.35px #e2e2e2;left:112px;">12 48 31 5a 00 00 01 01  08 0a 41 44 9d 1b 00 00</div><div class="t" style="left:928px;top:87.38px;font:26px/39px 'Liberation Mono', monospace;color:#e2e2e2;letter-spacing:0.40000000000000036px;"><span style="color:#8a8a8a">·</span>H1Z<span style="color:#8a8a8a">·</span><span style="color:#8a8a8a">·</span><span style="color:#8a8a8a">·</span><span style="color:#8a8a8a">·</span> <span style="color:#8a8a8a">·</span><span style="color:#8a8a8a">·</span>AD<span style="color:#8a8a8a">·</span><span style="color:#8a8a8a">·</span><span style="color:#8a8a8a">·</span><span style="color:#8a8a8a">·</span></div><div class="t" style="top:117.38px;font:26px/39px 'Liberation Mono', monospace;color:#8a8a8a;letter-spacing:0.40000000000000036px;transform:scaleY(1.15);transform-origin:0 26.42px;-webkit-text-stroke:0.35px #8a8a8a;left:17px;">0040</div><div class="t" style="top:117.38px;font:26px/39px 'Liberation Mono', monospace;color:#e2e2e2;letter-spacing:0.40000000000000036px;transform:scaleY(1.15);transform-origin:0 26.42px;-webkit-text-stroke:0.35px #e2e2e2;left:112px;">d1 21</div><div class="t" style="left:928px;top:117.38px;font:26px/39px 'Liberation Mono', monospace;color:#e2e2e2;letter-spacing:0.40000000000000036px;"><span style="color:#8a8a8a">·</span>!</div></div>
<div class="r" style="left:114px;top:1467px;width:2404px;height:3px;background:#181818;"></div>
<div class="r" style="left:114px;top:1470px;width:2404px;height:1.3px;background:#7a7a7a;"></div>
<div class="r" style="left:114px;top:1472px;width:2404px;height:51px;background:#2f2f2f;border-radius:0 0 12px 12px;"></div>
<div class="r" style="left:132.4px;top:1482.2px;width:27.6px;height:27.6px;border-radius:50%;box-sizing:border-box;border:2px solid #733a3a;background:radial-gradient(circle at 38% 25%,#f0a2a2,#e87474 45%,#e14f4f 90%);"></div>
<svg class="r" style="left:180px;top:1478px" width="34" height="36" viewBox="180 1478 34 36"><rect x="183.1" y="1482.1" width="21" height="27.4" fill="#f2f2ea"/><rect x="183.1" y="1482.1" width="21" height="6.8" fill="url(#gband2)"/><defs><linearGradient id="gband2" x1="0" y1="0" x2="1" y2="0"><stop offset="0" stop-color="#6cb8e8"/><stop offset="1" stop-color="#1f9ad8"/></linearGradient></defs><path d="M186,1488.9 C186.5,1486 188,1484 191,1483.5 C190,1485 189.5,1487 190.5,1488.9 Z" fill="#fff"/><text x="185" y="1496" font-family="Liberation Mono" font-size="5" fill="#a0a0a0">0000</text><text x="185" y="1501.5" font-family="Liberation Mono" font-size="5" fill="#a0a0a0">00110</text><text x="185" y="1507" font-family="Liberation Mono" font-size="5" fill="#a0a0a0">01100</text><line x1="193.5" y1="1499" x2="207.5" y2="1485" stroke="#505550" stroke-width="6" stroke-linecap="round"/><path d="M189.5,1502.5 L191.5,1496.5 L196,1501 Z" fill="#000"/></svg>
<div class="t" style="top:1480.08px;font:24px/36px 'Liberation Sans', sans-serif;color:#f2f2f2;letter-spacing:-0.2px;-webkit-text-stroke:0.3px #f2f2f2;left:251px;">Time to live (ip.ttl), 1 byte</div>
<div class="r" style="left:1567px;top:1491px;width:12px;height:12px;border-radius:50%;background:#474747;"></div>
<div class="t" style="top:1480.08px;font:24px/36px 'Liberation Sans', sans-serif;color:#f2f2f2;letter-spacing:-0.52px;-webkit-text-stroke:0.3px #f2f2f2;left:1602px;">Packets: 155794 · Displayed: 155794 (100.0%) · Dropped: 0 (0.0%)</div>
<div class="r" style="left:2298px;top:1492px;width:12px;height:12px;border-radius:50%;background:#474747;"></div>
<div class="t" style="top:1480.08px;font:24px/36px 'Liberation Sans', sans-serif;color:#f2f2f2;letter-spacing:-0.22px;-webkit-text-stroke:0.3px #f2f2f2;left:2334px;">Profile: Default</div>
<div class="r" style="left:112px;top:76px;width:2406px;height:1447px;border:2px solid #5c5c5c;border-top-color:#808080;border-radius:14px;box-sizing:border-box;"></div>
<div class="r" style="left:116px;top:122px;width:229px;height:68px;border:4px solid #fc2a1d;box-sizing:border-box;"></div>
<div class="r" style="left:116px;top:186px;width:2391px;height:59px;border:4px solid #fc2a1d;box-sizing:border-box;"></div>
<div class="r" style="left:116px;top:241px;width:2392px;height:406px;border:4px solid #fc2a1d;box-sizing:border-box;"></div>
<div class="r" style="left:116px;top:643px;width:2393px;height:437px;border:4px solid #fc2a1d;box-sizing:border-box;"></div>
<div class="r" style="left:115px;top:1075px;width:2393px;height:388px;border:4px solid #fc2a1d;box-sizing:border-box;"></div>
<div class="r" style="left:116px;top:1459px;width:2394px;height:65px;border:4px solid #fc2a1d;box-sizing:border-box;"></div>
<svg class="r" style="left:270px;top:80px" width="40" height="46" viewBox="270 80 40 46"><path d="M297.2,84.1 L292.8,84.1 Q291,89.5 286.5,91.3 Q284.5,92 281.8,92 L281.8,96 L291.6,96 L291.6,124 L297.2,124 Z" fill="#fc2a1d"/></svg>
<div class="t" style="top:171.89px;font:58px/87px 'Liberation Sans', sans-serif;color:#fc2a1d;right:1319.5px;transform:translateX(50%);">2</div>
<div class="t" style="top:401.39px;font:58px/87px 'Liberation Sans', sans-serif;color:#fc2a1d;right:1320.4px;transform:translateX(50%);">3</div>
<div class="t" style="top:817.39px;font:58px/87px 'Liberation Sans', sans-serif;color:#fc2a1d;right:1319.6px;transform:translateX(50%);">4</div>
<div class="t" style="top:1226.39px;font:58px/87px 'Liberation Sans', sans-serif;color:#fc2a1d;right:1319.4px;transform:translateX(50%);">5</div>
<div class="t" style="top:1449.89px;font:58px/87px 'Liberation Sans', sans-serif;color:#fc2a1d;right:1320.6px;transform:translateX(50%);">6</div>
</div>
</body></html>
